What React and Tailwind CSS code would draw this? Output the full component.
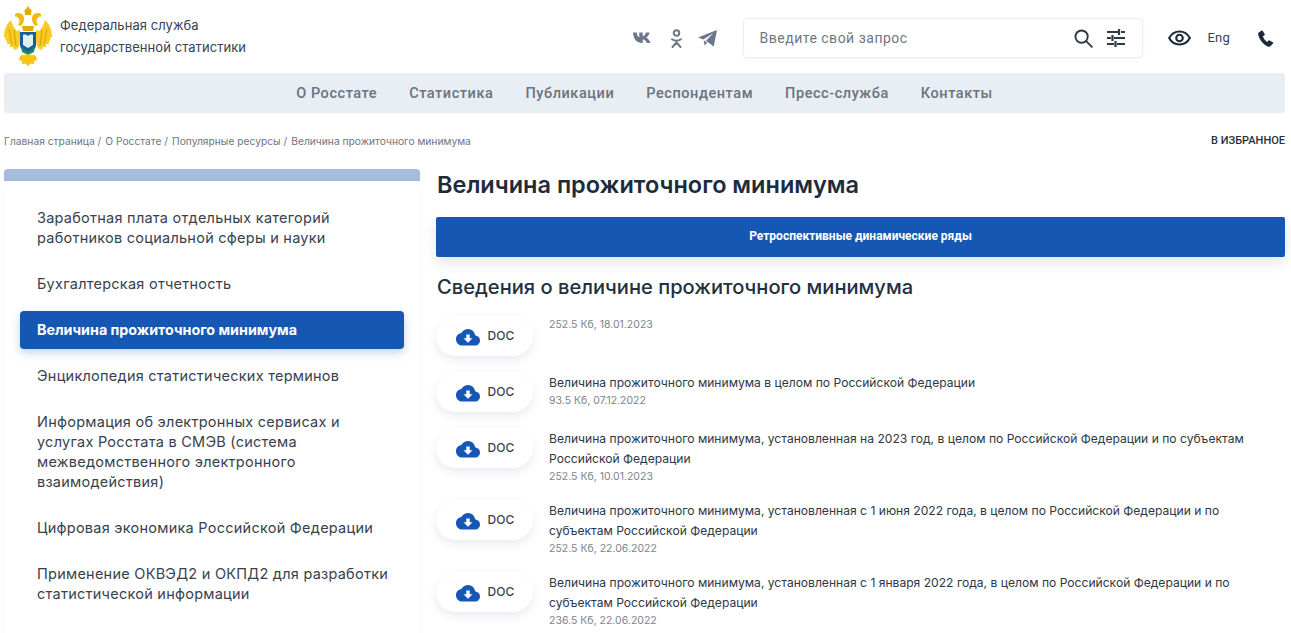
import React from 'react';

const sideItems = [
  { title: 'Заработная плата отдельных категорий работников социальной сферы и науки' },
  { title: 'Бухгалтерская отчетность' },
  { title: 'Величина прожиточного минимума', active: true },
  { title: 'Энциклопедия статистических терминов' },
  { title: 'Информация об электронных сервисах и услугах Росстата в СМЭВ (система межведомственного электронного взаимодействия)' },
  { title: 'Цифровая экономика Российской Федерации' },
  { title: 'Применение ОКВЭД2 и ОКПД2 для разработки статистической информации' },
  { title: 'Малое и среднее предпринимательство' },
];

const docs = [
  { title: '', meta: '252.5 Кб, 18.01.2023' },
  { title: 'Величина прожиточного минимума в целом по Российской Федерации', meta: '93.5 Кб, 07.12.2022' },
  { title: 'Величина прожиточного минимума, установленная на 2023 год, в целом по Российской Федерации и по субъектам Российской Федерации', meta: '252.5 Кб, 10.01.2023' },
  { title: 'Величина прожиточного минимума, установленная с 1 июня 2022 года, в целом по Российской Федерации и по субъектам Российской Федерации', meta: '252.5 Кб, 22.06.2022' },
  { title: 'Величина прожиточного минимума, установленная с 1 января 2022 года, в целом по Российской Федерации и по субъектам Российской Федерации', meta: '236.5 Кб, 22.06.2022' },
];

const nav = ['О Росстате', 'Статистика', 'Публикации', 'Респондентам', 'Пресс-служба', 'Контакты'];

const Eagle = () => (
  <svg width="48" height="60" viewBox="0 0 48 60" className="shrink-0 -mt-[5px]">
    {/* crown */}
    <path d="M24 0l1.500 2.500 2 1.500-.5 5h-6l-.5-5 2-1.500z" fill="#e5ac00" />
    {/* heads and necks */}
    <path d="M11 8c3-2 6-1 8 1 1.500 2 1.500 5 0 8l-2 3-3-1c1-2 2-4 1-6-1-2-2.500-2.500-4-2.500z" fill="#f2bb10" />
    <path d="M37 8c-3-2-6-1-8 1-1.500 2-1.500 5 0 8l2 3 3-1c-1-2-2-4-1-6 1-2 2.500-2.500 4-2.500z" fill="#f2bb10" />
    {/* wings, notched feathers */}
    <path d="M7 14C2.500 18 0 24 0 31l2 1-1 2 2 1 0 3 3 0 0 3 3 0 1 3 3-1c2-2 3-5 3-8V24l-3.500 1C10 22 8 18 7 14z" fill="#f8cc26" />
    <path d="M41 14c4.500 4 7 10 7 17l-2 1 1 2-2 1 0 3-3 0 0 3-3 0-1 3-3-1c-2-2-3-5-3-8V24l3.500 1C38 22 40 18 41 14z" fill="#f8cc26" />
    <path d="M5 23l3 15M10 24l2 16M43 23l-3 15M38 24l-2 16" stroke="#dfa400" strokeWidth="1.200" fill="none" />
    <path d="M18 20h12l-1 5H19z" fill="#e5ac00" />
    {/* shield */}
    <path d="M16 26h16v13c0 4-4 6-8 8-4-2-8-4-8-8z" fill="#1c5d99" />
    <path d="M19 29c2-1 4 0 5 1 1-1 3-2 5-1v10l-5 3-5-3z" fill="#dff1ec" />
    <path d="M17 41l7 5 7-5-1 5-6 3-6-3z" fill="#1f8d60" />
    {/* tail */}
    <path d="M16 50c4-2 12-2 16 0l1 4-3 1 0 3-3-.5L24 60l-3-2.500-3 .5 0-3-3-1z" fill="#f6c517" />
  </svg>
);

const Vk = () => (
  <svg width="20" height="12" viewBox="0 0 20 12" fill="#6b7789">
    <path d="M0 .5h3.600c.4 2.600 1.300 4.300 2.700 5V.5h3.400v3.900c1.500-.5 2.700-2 3.400-3.900h3.500c-.6 2.400-2 4.200-3.500 5 1.700.8 3.400 2.700 4.400 5.500h-3.700c-.8-2-2.200-3.300-4.100-3.700V11H9C4 11 .6 7.500 0 .5z" />
  </svg>
);

const Ok = () => (
  <svg width="11" height="19" viewBox="0 0 11 19" fill="none" stroke="#6b7789" strokeWidth="1.900">
    <circle cx="5.500" cy="4" r="2.800" />
    <path d="M1 10.200c2.800 1.800 6.200 1.800 9 0M1.500 18l4-4.500 4 4.500M5.500 12v1.500" strokeLinecap="round" />
  </svg>
);

const Telegram = () => (
  <svg width="19" height="17" viewBox="0 0 19 17" fill="#6b7789">
    <path d="M19 0L0 7.600l5.300 1.900L15.500 3 8 10.700l7.700 5.800z" />
    <path d="M5.700 10.300l1 5.400 2.400-3.100z" />
  </svg>
);

const Search = () => (
  <svg width="19" height="19" viewBox="0 0 20 20" fill="none" stroke="#2f3a46" strokeWidth="2">
    <circle cx="8" cy="8" r="6.500" />
    <path d="M12.800 12.800l6 6" strokeLinecap="round" />
  </svg>
);

const Sliders = () => (
  <svg width="20" height="18" viewBox="0 0 20 18" fill="none" stroke="#2f3a46" strokeWidth="2.200">
    <path d="M1 3h11M15 3h4M13 0v6M1 9h4M8 9h11M6.500 6v6M1 15h7M11 15h8M9.500 12v6" />
  </svg>
);

const Eye = () => (
  <svg width="23" height="16" viewBox="0 0 24 16" fill="none" stroke="#1f2a37" strokeWidth="2.200">
    <path d="M1.200 8C3.500 3.800 7.500 1.200 12 1.200S20.500 3.800 22.800 8C20.500 12.200 16.500 14.800 12 14.800S3.500 12.200 1.200 8z" />
    <circle cx="12" cy="8" r="3.400" />
  </svg>
);

const Phone = () => (
  <svg width="16" height="17" viewBox="0 0 16 17" fill="#1f2a37">
    <path d="M3.700.6L1 2.200C.2 2.800 0 3.800.2 4.700c1.500 5.400 5 9.700 9.900 12 .9.300 1.900.1 2.500-.6l2.400-2.500c.4-.4.300-1-.2-1.300l-3.200-1.900c-.4-.2-.8-.2-1.100.2l-1.200 1.500C7.500 11 5.700 8.700 4.800 6.200l1.600-1c.4-.2.500-.7.300-1.100L4.800 1C4.600.5 4.100.4 3.700.6z" />
  </svg>
);

const CloudDown = () => (
  <svg width="24" height="17" viewBox="0 0 24 17">
    <path d="M19.300 6.600C18.600 2.800 15.600 0 12 0 9.100 0 6.600 1.700 5.300 4.100 2.300 4.500 0 7 0 10.200 0 13.700 2.700 16.500 6 16.500h13c2.800 0 5-2.400 5-5.100 0-2.600-2-4.600-4.700-4.800z" fill="#1757b4" />
    <path d="M10.300 5.500h3.400v3.700h2.800L12 13.700 7.500 9.200h2.800z" fill="#fff" />
  </svg>
);

const DocRow = ({ doc }) => (
  <div className="flex items-start h-full">
    <div className="mt-[9px] w-[97px] h-[40px] shrink-0 rounded-[20px] bg-white shadow-[0_4px_10px_rgba(40,60,100,0.10)] flex items-center justify-center gap-[8px] pl-[1px]">
      <div className="mt-[2px]"><CloudDown /></div>
      <span className="text-[12px] font-medium text-[#3a4552] tracking-[0.1px]">DOC</span>
    </div>
    <div className="ml-[16px] mt-[10px] pr-[20px] text-[12.100px] leading-[20px] text-[#2d3844]">
      {doc.title && <div>{doc.title}</div>}
      <div className="text-[10.500px] leading-[14px] mt-[1px] text-[#7b848e]">{doc.meta}</div>
    </div>
  </div>
);

export default function App() {
  return (
    <div className="w-[1291px] h-[633px] overflow-hidden bg-white font-['Inter',sans-serif] text-[#2d3844]">
      <header className="flex items-center h-[73px] pl-[4px] pr-[17px] pt-[3px]">
        <Eagle />
        <div className="ml-[8px] -mt-[4px] text-[13px] leading-[22px] text-[#37424e] tracking-[0.06px]">
          <div>Федеральная служба</div>
          <div>государственной статистики</div>
        </div>
        <div className="ml-auto flex items-center">
          <Vk />
          <div className="ml-[18px]"><Ok /></div>
          <div className="ml-[16px]"><Telegram /></div>
          <div className="ml-[26px] w-[400px] h-[40px] rounded-[4px] border border-[#eceef2] shadow-[0_1px_3px_rgba(40,60,100,0.06)] flex items-center pl-[16px] pr-[16px] font-['Roboto',sans-serif]">
            <span className="text-[14px] text-[#6e7780] tracking-[0.5px]">Введите свой запрос</span>
            <div className="ml-auto flex items-center gap-[13px]"><Search /><Sliders /></div>
          </div>
          <div className="ml-[25px]"><Eye /></div>
          <span className="ml-[17px] text-[13px] text-[#37424e] font-['Roboto',sans-serif] tracking-[0.2px]">Eng</span>
          <div className="ml-[28px]"><Phone /></div>
        </div>
      </header>

      <nav className="mx-[4px] w-[1281px] h-[40px] pt-[2px] rounded-[3px] bg-[#e9edf4] flex items-center justify-center gap-[32px] font-['Roboto',sans-serif] text-[14.500px] font-medium text-[#6a7380] tracking-[0.56px]">
        {nav.map((n) => <span key={n}>{n}</span>)}
      </nav>

      <div className="flex items-center justify-between pl-[4px] pr-[6px] h-[58px] pb-[1px] text-[10.250px] text-[#6d7680]">
        <div className="flex gap-[4px]">
          <span>Главная страница /</span>
          <span>О Росстате /</span>
          <span>Популярные ресурсы /</span>
          <span>Величина прожиточного минимума</span>
        </div>
        <span className="text-[#27313c] font-['Roboto',sans-serif] text-[11px] font-medium">В ИЗБРАННОЕ</span>
      </div>

      <div className="flex pl-[4px] pr-[6px]">
        <aside className="w-[416px] shrink-0 -mt-[2px]">
          <div className="h-[12px] rounded-t-[4px] bg-[#a6bcdc]" />
          <div className="pt-[18px] px-[16px] shadow-[0_0_8px_rgba(40,60,100,0.03)] flex flex-col gap-[8px] pb-[20px]">
            {sideItems.map((item) => (
              <div
                key={item.title}
                className={item.active
                  ? 'pl-[17px] pr-[13px] py-[9px] rounded-[4px] bg-[#1757b4] text-white text-[14.300px] leading-[20px] font-bold shadow-[0_4px_10px_rgba(23,87,180,0.25)]'
                  : 'pl-[17px] pr-[13px] py-[9px] text-[14.500px] leading-[20px] text-[#37424e] tracking-[0.25px]'}
              >
                {item.title}
              </div>
            ))}
          </div>
        </aside>
        <main className="ml-[17px] flex-1 min-w-0 -mt-[2px]">
          <h1 className="text-[23.500px] leading-[30px] font-semibold text-[#1c2c3c] mt-[1px]">Величина прожиточного минимума</h1>
          <div className="-ml-[1px] mt-[17px] h-[40px] pb-[2px] rounded-[2px] bg-[#1757b4] text-white text-[12px] font-['Roboto',sans-serif] font-bold flex items-center justify-center shadow-[0_6px_14px_rgba(40,60,100,0.12)]">
            Ретроспективные динамические ряды
          </div>
          <h2 className="mt-[15px] text-[20.100px] leading-[30px] font-medium text-[#22303f]">Сведения о величине прожиточного минимума</h2>
          <div className="-ml-[1px] mt-[5px] flex flex-col">
            {docs.map((d, i) => (
              <div key={d.meta + i} className={i < 2 ? 'h-[56px]' : 'h-[72px]'}>
                <DocRow doc={d} />
              </div>
            ))}
          </div>
        </main>
      </div>
    </div>
  );
}
